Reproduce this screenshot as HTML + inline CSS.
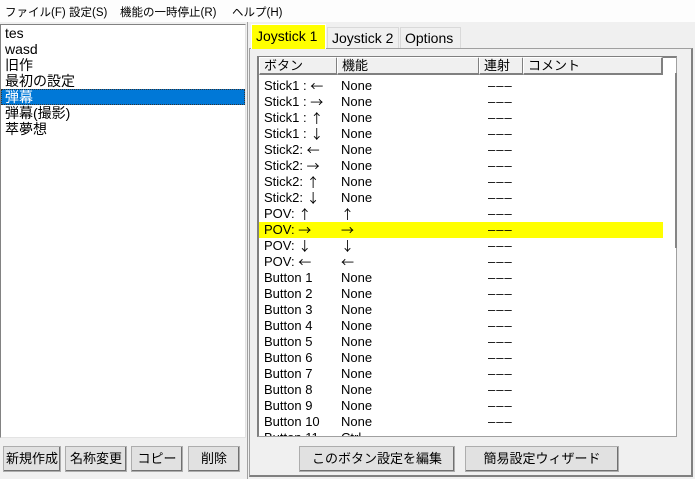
<!DOCTYPE html>
<html><head><meta charset="utf-8"><style>
*{margin:0;padding:0;box-sizing:border-box}
body{width:695px;height:479px;background:#f0f0f0;font-family:"Liberation Sans","Noto Sans CJK JP",sans-serif;font-size:13px;color:#000;position:relative;overflow:hidden}
.a{position:absolute}
.menu{left:0;top:0;width:695px;height:22px;background:#fdfdfd;font-size:11.5px}
.menu span{position:absolute;top:4px;white-space:nowrap}
.list{left:0;top:24px;width:246px;height:414px;background:#fff;border:1px solid #828282;border-right-color:#e3e3e3;border-bottom-color:#e3e3e3}
.list div{height:16px;line-height:16px;padding-left:4px;font-size:14px}
.sel{background:#0078d7;color:#fff;outline:1px dotted #333;outline-offset:-1px}
.btn{background:#e1e1e1;border:1px solid #adadad;box-shadow:inset -1px -1px 0 #707070;text-align:center;font-size:13px;line-height:24px}
.tab{top:27px;height:21px;background:#f0f0f0;border:1px solid #d9d9d9;border-bottom:none;font-size:14px;line-height:20px;padding:0 4px}
.panel{left:249px;top:48px;width:444px;height:429px;border:1px solid #a0a0a0;border-right:2px solid #808080;border-bottom:2px solid #808080}
.lv{left:257px;top:56px;width:420px;height:381px;background:#fff;border:1px solid #a0a0a0;border-top:2px solid #808080;border-left:2px solid #808080}
.hdr{top:57px;height:18px;background:#f0f0f0;border:1px solid #fff;border-right:2px solid #808080;border-bottom:2px solid #808080;font-size:13px;line-height:15px;padding-left:4px}
.ar{font-family:"Noto Sans CJK JP",sans-serif;font-size:13px;line-height:16px;display:inline-block;vertical-align:top}
.d{position:absolute;left:229px;top:0;letter-spacing:1px}
</style></head><body>
<div class="a menu"><span style="left:5px">ファイル(F)</span><span style="left:69px">設定(S)</span><span style="left:120px">機能の一時停止(R)</span><span style="left:232px">ヘルプ(H)</span></div>
<div class="a list"><div>tes</div><div>wasd</div><div>旧作</div><div>最初の設定</div><div class="sel">弾幕</div><div>弾幕(撮影)</div><div>萃夢想</div></div>
<div class="a btn" style="left:3px;top:446px;width:58px;height:26px">新規作成</div>
<div class="a btn" style="left:65px;top:446px;width:62px;height:26px">名称変更</div>
<div class="a btn" style="left:131px;top:446px;width:52px;height:26px">コピー</div>
<div class="a btn" style="left:188px;top:446px;width:52px;height:26px">削除</div>
<div class="a" style="left:247px;top:22px;width:1px;height:457px;background:#a0a0a0"></div>
<div class="a panel"></div>
<div class="a tab" style="left:251px;top:24px;height:25px;background:#ffff00;border-color:#fff;line-height:22px;width:75px">Joystick 1</div>
<div class="a tab" style="left:327px;width:72px">Joystick 2</div>
<div class="a tab" style="left:400px;width:61px">Options</div>
<div class="a lv"></div>
<div class="a hdr" style="left:259px;width:79px">ボタン</div>
<div class="a hdr" style="left:337px;width:143px">機能</div>
<div class="a hdr" style="left:479px;width:45px">連射</div>
<div class="a hdr" style="left:523px;width:140px">コメント</div>
<div class="a" style="left:675px;top:73px;width:2px;height:175px;background:#858585"></div>
<div class="a btn" style="left:299px;top:446px;width:156px;height:26px">このボタン設定を編集</div>
<div class="a btn" style="left:465px;top:446px;width:154px;height:26px">簡易設定ウィザード</div>
<div class="a" style="left:259px;top:78px;width:404px;height:358px;overflow:hidden">
<div style="position:relative">
<script>
function f(s){return s.replace(/[←→↑↓]/g,function(c){return '<span class="ar">'+c+'</span>'})}
var r=[["Stick1 : ←","None"],["Stick1 : →","None"],["Stick1 : ↑","None"],["Stick1 : ↓","None"],["Stick2: ←","None"],["Stick2: →","None"],["Stick2: ↑","None"],["Stick2: ↓","None"],["POV: ↑","↑"],["POV: →","→"],["POV: ↓","↓"],["POV: ←","←"]];
for(var i=1;i<=10;i++)r.push(["Button "+i,"None"]);r.push(["Button 11","Ctrl"]);
var h="";r.forEach(function(x,i){h+='<div style="position:absolute;left:0;top:'+(i*16)+'px;width:404px;height:16px;line-height:16px;'+(i==9?'background:#ffff00;':'')+'"><span style="position:absolute;left:5px">'+f(x[0])+'</span><span style="position:absolute;left:82px">'+f(x[1])+'</span><span class="d">–––</span></div>'});
document.write(h);
</script>
</div></div>
</body></html>
